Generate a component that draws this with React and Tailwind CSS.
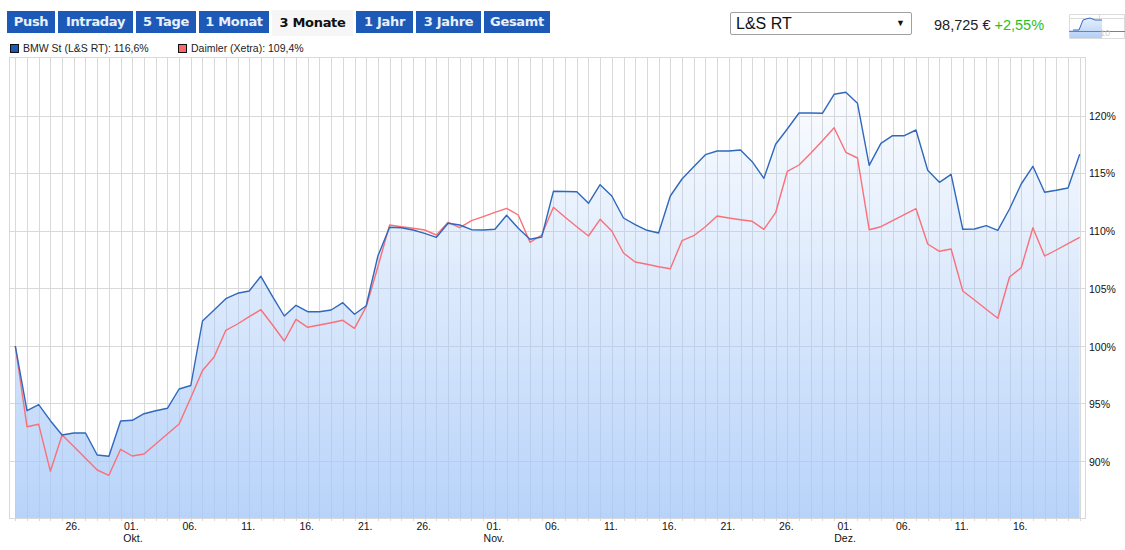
const tabs = [
  { label: "Push", w: "w-[48px]" },
  { label: "Intraday", w: "w-[75px]" },
  { label: "5 Tage", w: "w-[60px]" },
  { label: "1 Monat", w: "w-[70px]" },
  { label: "3 Monate", w: "w-[81px]", active: true },
  { label: "1 Jahr", w: "w-[57px]" },
  { label: "3 Jahre", w: "w-[65px]" },
  { label: "Gesamt", w: "w-[66px]" },
];

const blue = [346, 410.7, 404.7, 420.7, 435, 433, 433, 455, 456.3, 421, 420.3, 413.7, 410.7, 408.3, 389, 385.5, 321, 310, 298.7, 293.3, 291, 276.3, 296.7, 316, 305.3, 311.7, 311.7, 310, 302.7, 314.3, 305.7, 256, 227.3, 227.7, 230, 233.3, 237.3, 223.3, 225, 229.7, 230, 229.3, 215.3, 228.3, 239.3, 237, 191.3, 191.5, 191.7, 203.3, 184.7, 196, 218, 224.7, 230.3, 233, 196, 179, 166.7, 154.7, 151, 151, 150, 161.7, 178.3, 144.3, 129, 113, 113, 113.3, 94.3, 92.3, 103.3, 165.3, 143.3, 135.7, 135.7, 130, 170.3, 182.3, 174.3, 229.3, 229, 225.7, 230.3, 209, 184, 166.3, 192.3, 190.3, 188, 154.3];
const red = [346, 426.7, 424.3, 471.3, 435, 446.5, 458.3, 470, 475.3, 449.3, 456, 454, 444, 434, 424, 397.7, 370.5, 357, 330.3, 324, 316.7, 309.7, 325, 341, 319.3, 327.3, 325, 322.7, 320.3, 328.3, 306.7, 266.7, 225, 226.7, 228.3, 230, 235, 222.3, 227.7, 220.7, 216.7, 212.3, 208.3, 215, 242.3, 235, 207.3, 217.3, 226.7, 236, 219.3, 231, 253, 262, 264.3, 266.7, 268.7, 240.7, 235.7, 226.7, 216, 218, 219.7, 221.3, 229.3, 212.7, 171.3, 165, 153.3, 140.7, 127.7, 152.3, 158, 229.7, 226.7, 220.7, 214.7, 208.7, 244, 251.3, 249, 291, 300, 309.3, 318.3, 277, 267.7, 227.7, 256, 250, 243.7, 237.3];

const xAt = (i) => 15.3 + i * 11.697;
const pts = (ys) => ys.map((y, i) => `${xAt(i).toFixed(1)},${y}`).join(" ");

const yTicks = [
  [115.5, "120%"],
  [172.9, "115%"],
  [230.5, "110%"],
  [288.1, "105%"],
  [346, "100%"],
  [403.4, "95%"],
  [461, "90%"],
];
const xLabels = [
  [5, "26."],
  [10, "01."],
  [15, "06."],
  [20, "11."],
  [25, "16."],
  [30, "21."],
  [35, "26."],
  [41, "01."],
  [46, "06."],
  [51, "11."],
  [56, "16."],
  [61, "21."],
  [66, "26."],
  [71, "01."],
  [76, "06."],
  [81, "11."],
  [86, "16."],
];
const months = [
  [133, "Okt."],
  [494, "Nov."],
  [845, "Dez."],
];

function Chart() {
  return (
    <svg width="1125" height="494" viewBox="0 56 1125 494" className="block">
      <defs>
        <linearGradient id="area" gradientUnits="userSpaceOnUse" x1="0" y1="92" x2="0" y2="518">
          <stop offset="0" stopColor="#a6c8f8" stopOpacity="0.05" />
          <stop offset="1" stopColor="#a6c8f8" stopOpacity="0.8" />
        </linearGradient>
      </defs>
      <g stroke="#d9d9d9" strokeWidth="1" shapeRendering="crispEdges">
        {blue.map((_, i) => (
          <line key={i} x1={Math.round(xAt(i)) + 0.5} y1="57" x2={Math.round(xAt(i)) + 0.5} y2="521" />
        ))}
        {yTicks.map(([y]) => (
          <line key={y} x1="9" y1={Math.round(y) + 0.5} x2="1085" y2={Math.round(y) + 0.5} />
        ))}
        <line x1="9.5" y1="57" x2="9.5" y2="518" />
        <line x1="1085.5" y1="57" x2="1085.5" y2="518" />
        <line x1="9" y1="518.5" x2="1086" y2="518.5" />
        <line x1="9" y1="57.5" x2="1086" y2="57.5" />
      </g>
      <polygon points={`15.3,518 ${pts(blue)} 1079.7,518`} fill="url(#area)" />
      <polyline points={pts(red)} fill="none" stroke="#fa7078" strokeWidth="1.4" strokeLinejoin="round" />
      <polyline points={pts(blue)} fill="none" stroke="#2f68bd" strokeWidth="1.4" strokeLinejoin="round" />
      <g fontFamily="'Liberation Sans', sans-serif" fontSize="10.5" fill="#111">
        {yTicks.map(([y, t]) => (
          <text key={t} x="1089" y={y + 4.5}>{t}</text>
        ))}
        {xLabels.map(([i, t]) => (
          <text key={i} x={xAt(i) - 1} y="530" textAnchor="middle">{t}</text>
        ))}
        {months.map(([x, t]) => (
          <text key={t} x={x} y="542" textAnchor="middle">{t}</text>
        ))}
      </g>
    </svg>
  );
}

// kleine Vorschau oben rechts
function Spark() {
  return (
    <svg width="56" height="26" viewBox="0 0 56 26" className="block">
      <defs>
        <linearGradient id="sparkArea" x1="0" y1="0" x2="0" y2="1">
          <stop offset="0" stopColor="#e6effc" />
          <stop offset="1" stopColor="#b4cff6" />
        </linearGradient>
      </defs>
      <path d="M0.5 24.5V0.5H56M0.5 4.5H56M0.5 24.5H56M30.5 0V25M55.5 0V25" stroke="#dcdcdc" fill="none" />
      <path d="M1 16L4 16L10 16L14 6L17 5L21 4L26 6L29 6L33 6V24H1Z" fill="url(#sparkArea)" />
      <path d="M4 16L10 16L14 6L17 5L21 4L26 6L29 6L33 6" stroke="#2f68bd" fill="none" />
      <path d="M0 17.5H56" stroke="#808080" />
      <text x="31" y="22" fontSize="9" fill="#ccc" fontFamily="'Liberation Sans', sans-serif">10</text>
    </svg>
  );
}

export default function App() {
  return (
    <div className="w-[1125px] h-[550px] bg-white overflow-hidden font-['Liberation_Sans',sans-serif]">
      <div className="flex items-start h-[40px] pl-[7px] pt-[10px]">
        <div className="flex gap-[3px] items-start">
          {tabs.map((t) => (
            <span
              key={t.label}
              className={
                t.active
                  ? `${t.w} h-[26px] flex items-center justify-center whitespace-nowrap bg-[#f6f6f6] text-[#111] text-[13px] tracking-[-0.3px] font-bold font-['DejaVu_Sans',sans-serif]`
                  : `${t.w} h-[22px] mt-[1px] flex items-center justify-center whitespace-nowrap bg-[#1d5ab8] text-[#e8f0fb] text-[13px] tracking-[-0.3px] font-bold font-['DejaVu_Sans',sans-serif]`
              }
            >
              {t.label}
            </span>
          ))}
        </div>
        <div className="ml-[180px] mt-[2px] w-[182px] h-[23px] border border-[#a0a0a0] rounded-[2px] flex items-center justify-between pl-[5px] pr-[6px] text-[16px] text-[#111]">
          <span>L&amp;S RT</span>
          <span className="text-[9px]">▼</span>
        </div>
        <div className="ml-[22px] mt-[5px] text-[14.5px] whitespace-nowrap text-[#222]">
          98,725 € <span className="text-[#1fc21f]">+2,55%</span>
        </div>
        <div className="ml-auto mt-[4px]">
          <Spark />
        </div>
      </div>
      <div className="flex items-center h-[16px] pt-[1px] pl-[10px] text-[10.5px] text-[#222]">
        <span className="w-[9px] h-[9px] bg-[#1d5ab8] border border-[#111] mr-[4px]" />
        <span className="w-[155px]">BMW St (L&amp;S RT): 116,6%</span>
        <span className="w-[9px] h-[9px] bg-[#fa6a6a] border border-[#111] mr-[4px]" />
        <span>Daimler (Xetra): 109,4%</span>
      </div>
      <Chart />
    </div>
  );
}
